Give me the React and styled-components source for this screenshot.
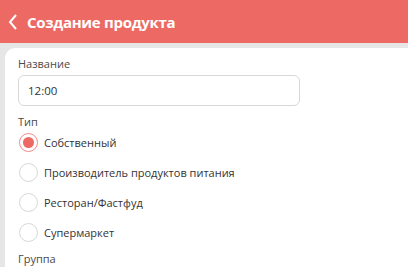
import React, { useState } from 'react';
import styled, { createGlobalStyle } from 'styled-components';

const GlobalStyle = createGlobalStyle`
  html, body {
    margin: 0;
    padding: 0;
    background: #e6e6e6;
    font-family: 'Open Sans', 'Noto Sans', sans-serif;
  }
`;

const Page = styled.div`
  width: 408px;
  height: 267px;
  overflow: hidden;
  display: flex;
  flex-direction: column;
  background: #e6e6e6;
`;

const Header = styled.div`
  height: 43px;
  flex-shrink: 0;
  background: #ec6964;
  display: flex;
  align-items: center;
  padding-left: 8px;
  gap: 9px;
  color: #fff;
`;

const Title = styled.h1`
  margin: 0;
  font-size: 15px;
  font-weight: 700;
  letter-spacing: -0.3px;
`;

const Card = styled.div`
  flex: 1;
  margin: 5px -10px 0 5px;
  background: #fff;
  border-radius: 10px 10px 0 0;
  padding: 8px 13px 0 13px;
`;

const Label = styled.div`
  font-size: 11px;
  color: #4a4a4a;
  line-height: 15px;
  margin-top: ${(p) => p.$top || 0}px;
`;

const Input = styled.input`
  box-sizing: border-box;
  width: 282px;
  height: 31px;
  margin-top: 4px;
  border: 1px solid #d8d8d8;
  border-radius: 6px;
  padding: 0 9px;
  font: inherit;
  font-size: 11.5px;
  color: #333;
  outline: none;
`;

const RadioList = styled.div`
  display: flex;
  flex-direction: column;
  margin-top: -2px;
`;

const Option = styled.label`
  display: flex;
  align-items: center;
  height: 30px;
  gap: 6px;
  font-size: 11px;
  color: #333;
  cursor: pointer;
`;

const Circle = styled.span`
  box-sizing: border-box;
  width: 19px;
  height: 19px;
  border-radius: 50%;
  border: 1px solid ${(p) => (p.$checked ? '#f08c88' : '#d8d8d8')};
  display: flex;
  align-items: center;
  justify-content: center;
  margin-left: 1px;

  &::after {
    content: '';
    width: 11px;
    height: 11px;
    border-radius: 50%;
    background: #ec6964;
    display: ${(p) => (p.$checked ? 'block' : 'none')};
  }
`;

const types = [
  'Собственный',
  'Производитель продуктов питания',
  'Ресторан/Фастфуд',
  'Супермаркет',
];

export default function App() {
  const [type, setType] = useState(0);
  return (
    <Page>
      <GlobalStyle />
      <Header>
        <svg width="10" height="18" viewBox="0 0 10 18" aria-hidden="true">
          <polyline points="8,2 2,9 8,16" fill="none" stroke="#fff" strokeWidth="2" />
        </svg>
        <Title>Создание продукта</Title>
      </Header>
      <Card>
        <Label>Название</Label>
        <Input defaultValue="12:00" />
        <Label $top={8}>Тип</Label>
        <RadioList>
          {types.map((t, i) => (
            <Option key={t} onClick={() => setType(i)}>
              <Circle $checked={type === i} />
              {t}
            </Option>
          ))}
        </RadioList>
        <Label $top={4}>Группа</Label>
      </Card>
    </Page>
  );
}
